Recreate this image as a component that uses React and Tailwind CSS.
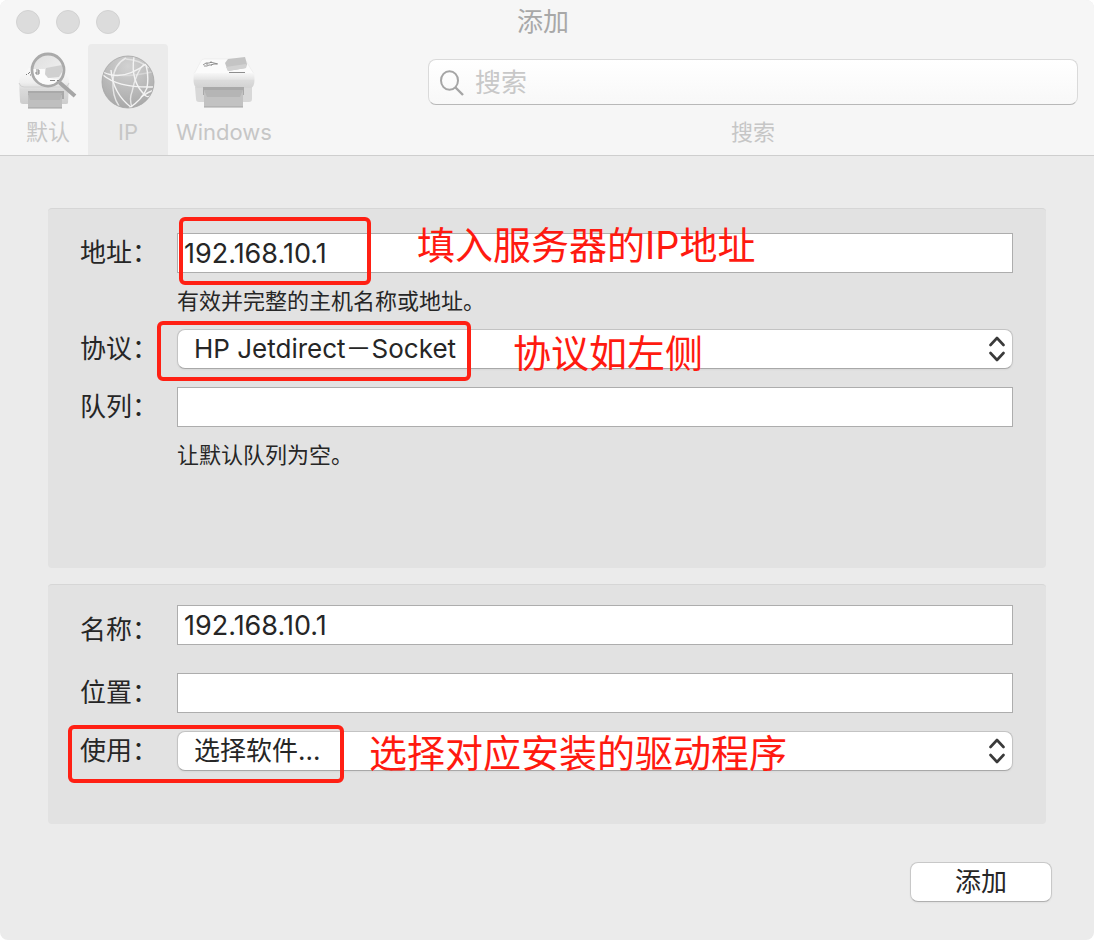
import React, { useState } from 'react';

const DefaultPrinterIcon = () => (
    <svg viewBox="0 0 64 64" className="w-16 h-16" aria-hidden="true">
        <defs>
            <linearGradient id="dp-body" x1="0" y1="0" x2="0" y2="1">
                <stop offset="0" stopColor="#fafafa" />
                <stop offset="0.4" stopColor="#efefef" />
                <stop offset="0.6" stopColor="#dadada" />
                <stop offset="1" stopColor="#cdcdcd" />
            </linearGradient>
            <linearGradient id="dp-lens" x1="0" y1="0" x2="1" y2="1">
                <stop offset="0" stopColor="#dedede" />
                <stop offset="1" stopColor="#f4f4f4" />
            </linearGradient>
        </defs>
        <path d="M3 32 Q3 27 7 24 L13 18 H46 L50 24 Q53 27 53 32 L52 53 Q52 54 50 54 H7 Q4 54 4 51 Z" fill="url(#dp-body)" />
        <path d="M3 33 Q4 37 8 37 H48 Q52 37 53 33" fill="none" stroke="#d2d2d2" />
        <rect x="12" y="41" width="36" height="8" fill="#a9a9a9" />
        <path d="M12 45 H46 V58 H12 Z" fill="#bfbfbf" />
        <path d="M12 43 L14 50 H44 L46 43" fill="#b6b6b6" />
        <path d="M12 58 H46" stroke="#a0a0a0" />
        <path d="M10 25 l1 -1 M12 24 l2 -2 M14 25 h1" stroke="#7d7d7d" fill="none" />
        <path d="M43.5 32.5 L59 46" stroke="#a6a6a6" strokeWidth="4" />
        <circle cx="32" cy="20" r="16" fill="url(#dp-lens)" stroke="#aaaaaa" strokeWidth="2.8" />
        <path d="M17.5 19 H29 V25 Q33 29 42 29 L39 33 Q34 36 27 34 Q17 30 17.5 19 Z" fill="#fbfbfb" />
        <path d="M30 18 L46 15 L46 22 L43 27 L32 28 L29 24 Z" fill="#d0d0d0" />
        <path d="M20 20 h3 v4 h-3 v-2 h3" stroke="#7a7a7a" strokeWidth="0.9" fill="none" />
        <path d="M34 30.5 h5 M41 30.5 h2" stroke="#8a8a8a" />
    </svg>
);

const GlobeIcon = () => (
    <svg viewBox="0 0 64 64" className="w-16 h-16" aria-hidden="true">
        <defs>
            <radialGradient id="globe-fill" cx="0.5" cy="0.2" r="0.85">
                <stop offset="0" stopColor="#d2d2d2" />
                <stop offset="0.55" stopColor="#bababa" />
                <stop offset="1" stopColor="#a6a6a6" />
            </radialGradient>
            <clipPath id="globe-clip">
                <circle cx="32" cy="32" r="25.5" />
            </clipPath>
        </defs>
        <circle cx="32" cy="32" r="26" fill="url(#globe-fill)" stroke="#a6a6a6" strokeWidth="0.8" />
        <g clipPath="url(#globe-clip)" fill="none" stroke="#f3f3f3" strokeWidth="1.4">
            <path d="M7 22 Q26 32 50 14" />
            <path d="M7 25 Q22 38 58 37" />
            <path d="M12 24 Q30 28 56 22" opacity="0.4" />
            <path d="M30 8 Q18 14 17 30 Q16 46 23 56" opacity="0.8" />
            <path d="M15 20 Q17 44 36 58" />
            <path d="M38 7 Q34 32 50 46 Q53 48 57 44" />
            <path d="M48 14 Q40 22 36 42" opacity="0.8" />
            <path d="M36 42 Q33 48 36 58" opacity="0.8" />
            <path d="M50 15 Q53 26 51 38 Q46 50 33 58" />
            <path d="M30 9 Q44 10 53 18" opacity="0.6" />
            <path d="M45 47 Q52 42 58 40" />
        </g>
    </svg>
);

const WindowsPrinterIcon = () => (
    <svg viewBox="0 0 64 64" className="w-16 h-16" aria-hidden="true">
        <defs>
            <linearGradient id="wp-body" x1="0" y1="0" x2="0" y2="1">
                <stop offset="0" stopColor="#f7f7f7" />
                <stop offset="0.4" stopColor="#e6e6e6" />
                <stop offset="0.5" stopColor="#dcdcdc" />
                <stop offset="1" stopColor="#d2d2d2" />
            </linearGradient>
        </defs>
        <path d="M3 37 H60 V49 Q60 52 57 52 H7 Q4 52 4 49 Z" fill="#d8d8d8" />
        <path d="M2 24 L9 11 Q10 9 12 9 H51 Q53 9 54 11 L62 24 Z" fill="#fbfbfb" stroke="#eaeaea" strokeWidth="0.6" />
        <path d="M2 23 H62 Q63 30 62 34 Q61 38 58 38 H6 Q3 38 2 34 Q1 30 2 23 Z" fill="url(#wp-body)" />
        <rect x="11" y="37" width="41" height="8" fill="#a9a9a9" />
        <path d="M12 40 H51 V57 H12 Z" fill="#c2c2c2" />
        <path d="M12 40 L15 47 H48 L51 40" fill="#b5b5b5" />
        <path d="M12 57 H51" stroke="#a3a3a3" strokeWidth="1.2" />
        <path d="M33 13 L36 9 L53 7 L55 14 L54 18 L36 21 Z" fill="#c4c4c4" />
        <path d="M34 17 L54 14 L54 18 L36 21 Z" fill="#d2d2d2" />
        <path d="M37 22.5 H53" stroke="#8e8e8e" />
        <path d="M11 15 l3 -2 h3 l3 -1 M12 16 h3 l2 -1 h3 M18 12 l4 1 l4 1 M19 15 l3 -1 h3 M15 13 v2" stroke="#858585" strokeWidth="0.9" fill="none" />
    </svg>
);

const SearchIcon = () => (
    <svg viewBox="0 0 28 28" className="w-7 h-7" fill="none" stroke="#a5a5a5" strokeWidth="2" aria-hidden="true">
        <ellipse cx="11.5" cy="11.5" rx="8.5" ry="9.3" />
        <path d="M17.5 18.5 L25 26" strokeWidth="2.4" />
    </svg>
);

const UpDownIcon = () => (
    <svg viewBox="0 0 16 26" className="w-4 h-7" fill="none" stroke="#3a3a3a" strokeWidth="2.6" strokeLinecap="round" strokeLinejoin="round" aria-hidden="true">
        <path d="M1.5 9 L8 2 L14.5 9" />
        <path d="M1.5 17 L8 24 L14.5 17" />
    </svg>
);

const ToolbarButton = ({ label, icon, active, onClick, width }) => (
    <button
        type="button"
        onClick={onClick}
        aria-pressed={active}
        className={`${width} h-full flex flex-col items-center pt-1.5 text-[22px] leading-8 text-[#c6c6c6] ${active ? 'bg-[#ebebeb] rounded-t' : ''}`}
    >
        {icon}
        <span className="mt-0.5">{label}</span>
    </button>
);

const Label = ({ htmlFor, low, children }) => (
    <label htmlFor={htmlFor} className={`w-[97px] shrink-0 text-[26px] leading-[30px] ${low ? 'self-end' : ''}`}>
        {children}
    </label>
);

const TextField = ({ id, value, onChange }) => (
    <input
        id={id}
        type="text"
        value={value}
        onChange={(e) => onChange(e.target.value)}
        className="w-full h-10 px-1.5 bg-white border border-[#adadad] text-[27px] leading-[30px] outline-none"
    />
);

const SelectField = ({ id, options }) => (
    <>
        <select
            id={id}
            className="w-full h-10 pl-4 pr-10 appearance-none bg-white border border-[#c3c3c3] border-b-[#a8a8a8] rounded-lg text-[26px] leading-[30px] shadow-xs outline-none"
        >
            {options.map((option) => (
                <option key={option}>{option}</option>
            ))}
        </select>
        <span className="absolute right-2 top-1.5 pointer-events-none">
            <UpDownIcon />
        </span>
    </>
);

// Red frame and red note drawn over the form
const Frame = ({ className }) => (
    <span className={`absolute border-4 border-[#ff2014] rounded-md pointer-events-none ${className}`} />
);

const Note = ({ className, children }) => (
    <span className={`absolute text-[38px] leading-10 whitespace-nowrap text-[#ff1a10] pointer-events-none ${className}`}>
        {children}
    </span>
);

const Hint = ({ children }) => (
    <p className="h-14 pl-[97px] flex items-center text-[22px] leading-7">{children}</p>
);

export default function App() {
    const [tab, setTab] = useState('ip');
    const [address, setAddress] = useState('192.168.10.1');
    const [queue, setQueue] = useState('');
    const [name, setName] = useState('192.168.10.1');
    const [location, setLocation] = useState('');

    return (
        <div className="min-h-screen bg-white font-[Inter,'Noto_Sans_CJK_SC',sans-serif] text-[#262626]">
            <div className="min-h-screen flex flex-col bg-[#ebebeb] rounded-lg overflow-hidden">
                <header className="bg-[#f6f6f6] border-b border-[#cecece]">
                    {/* Title bar */}
                    <div className="h-11 px-4 flex items-center">
                        <div className="w-[104px] flex gap-4">
                            <span className="w-6 h-6 rounded-full bg-[#dcdcdc] border border-[#d2d2d2]" />
                            <span className="w-6 h-6 rounded-full bg-[#dcdcdc] border border-[#d2d2d2]" />
                            <span className="w-6 h-6 rounded-full bg-[#dcdcdc] border border-[#d2d2d2]" />
                        </div>
                        <h1 className="flex-1 text-center text-[26px] leading-[30px] text-[#a8a8a8]">添加</h1>
                        <div className="w-28" />
                    </div>

                    {/* Toolbar */}
                    <div className="h-[111px] pl-2 pr-4 flex">
                        <ToolbarButton width="w-20" label="默认" icon={<DefaultPrinterIcon />} active={tab === 'default'} onClick={() => setTab('default')} />
                        <ToolbarButton width="w-20" label="IP" icon={<GlobeIcon />} active={tab === 'ip'} onClick={() => setTab('ip')} />
                        <ToolbarButton width="w-28" label="Windows" icon={<WindowsPrinterIcon />} active={tab === 'windows'} onClick={() => setTab('windows')} />
                        <div className="flex-1 ml-37 pt-[15px] flex flex-col">
                            <div className="relative">
                                <span className="absolute left-2.5 top-2.5 pointer-events-none">
                                    <SearchIcon />
                                </span>
                                <input
                                    id="search"
                                    type="search"
                                    placeholder="搜索"
                                    className="w-full h-[46px] pl-[46px] pr-4 bg-linear-to-b from-white to-[#f8f8f8] border border-[#dadada] border-b-[#b8b8b8] rounded-lg text-[26px] placeholder:text-[#c8c8c8] outline-none"
                                />
                            </div>
                            <label htmlFor="search" className="mt-[11px] text-center text-[22px] leading-8 text-[#c6c6c6]">
                                搜索
                            </label>
                        </div>
                    </div>
                </header>

                <main className="flex-1 px-12 pt-13">
                    <section className="min-h-[360px] bg-[#e2e2e2] border-t border-[#d6d6d6] rounded-sm pl-8 pr-[33px] pt-6">
                        <div className="flex items-center">
                            <Label htmlFor="address">地址：</Label>
                            <div className="relative flex-1">
                                <TextField id="address" value={address} onChange={setAddress} />
                                <Frame className="left-0.5 -top-4 w-48 h-17" />
                                <Note className="left-60 -top-2">填入服务器的IP地址</Note>
                            </div>
                        </div>
                        <Hint>有效并完整的主机名称或地址。</Hint>
                        <div className="flex items-center">
                            <Label htmlFor="protocol">协议：</Label>
                            <div className="relative flex-1">
                                <SelectField id="protocol" options={['HP Jetdirect－Socket']} />
                                <Frame className="-left-5 -top-2 w-[314px] h-15" />
                                <Note className="left-84 top-1">协议如左侧</Note>
                            </div>
                        </div>
                        <div className="mt-[18px] flex items-center">
                            <Label htmlFor="queue">队列：</Label>
                            <div className="flex-1">
                                <TextField id="queue" value={queue} onChange={setQueue} />
                            </div>
                        </div>
                        <Hint>让默认队列为空。</Hint>
                    </section>

                    <section className="mt-4 min-h-60 bg-[#e2e2e2] border-t border-[#d6d6d6] rounded-sm pl-8 pr-[33px] pt-5">
                        <div className="flex items-center">
                            <Label htmlFor="name" low>名称：</Label>
                            <div className="flex-1">
                                <TextField id="name" value={name} onChange={setName} />
                            </div>
                        </div>
                        <div className="mt-7 flex items-center">
                            <Label htmlFor="location">位置：</Label>
                            <div className="flex-1">
                                <TextField id="location" value={location} onChange={setLocation} />
                            </div>
                        </div>
                        <div className="relative mt-[18px] flex items-center">
                            <Label htmlFor="driver">使用：</Label>
                            <div className="relative flex-1">
                                <SelectField id="driver" options={['选择软件...']} />
                                <Note className="left-48 top-0.5">选择对应安装的驱动程序</Note>
                            </div>
                            <Frame className="-left-3 -top-1.5 w-[276px] h-[58px]" />
                        </div>
                    </section>

                    <div className="py-[38px] -mr-1.5 flex justify-end">
                        <button
                            type="button"
                            className="w-[142px] h-10 bg-white border border-[#c8c8c8] border-b-[#b0b0b0] rounded-lg shadow-xs text-[26px] leading-[30px]"
                        >
                            添加
                        </button>
                    </div>
                </main>
            </div>
        </div>
    );
}
